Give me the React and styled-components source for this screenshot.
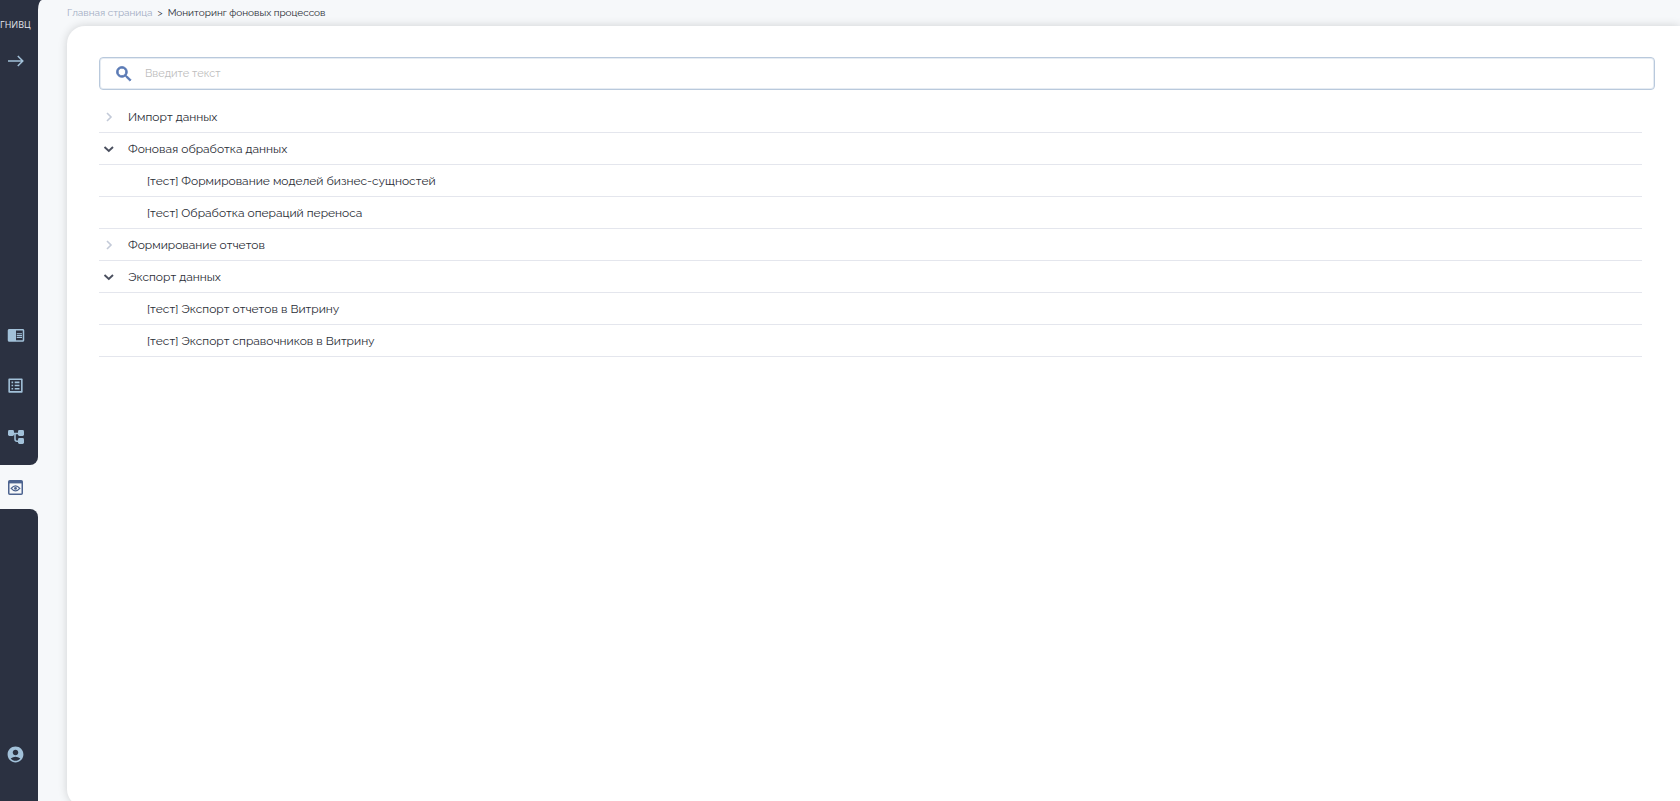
import React, { useState } from "react";
import styled, { createGlobalStyle } from "styled-components";
import {
  MdAccountCircle,
  MdChromeReaderMode,
  MdOutlineListAlt,
  MdSearch,
} from "react-icons/md";

const GlobalStyle = createGlobalStyle`
  *, *::before, *::after { box-sizing: border-box; }
  body {
    margin: 0;
    background: #f6f8fa;
    color: #2a2d36;
    font-family: Raleway, "Open Sans", "Noto Sans", sans-serif;
    font-size: 12px;
  }
  button, input { font: inherit; color: inherit; }
`;

const Page = styled.div`
  display: flex;
  height: 100vh;
  overflow: hidden;
  background: #2b3141;
`;

const Sidebar = styled.nav`
  display: flex;
  flex: none;
  flex-direction: column;
  width: 38px;
  background: #f6f8fa;
`;

const SideBlock = styled.div`
  display: flex;
  flex-direction: column;
  align-items: flex-start;
  background: #2b3141;
`;

const UpperBlock = styled(SideBlock)`
  flex: 1 1 208px;
  padding: 17px 0 3px;
  border-bottom-right-radius: 8px;
`;

const LowerBlock = styled(SideBlock)`
  flex: 1 1 35px;
  justify-content: flex-end;
  padding-bottom: 35px;
  border-top-right-radius: 8px;
`;

const Logo = styled.span`
  margin-bottom: 16px;
  color: #e3e6ec;
  font-family: "Open Sans", "Noto Sans", sans-serif;
  font-size: 9px;
  line-height: 16px;
`;

const NavButton = styled.button`
  display: flex;
  flex: none;
  align-items: center;
  justify-content: center;
  width: 31px;
  height: ${(p) => (p.$compact ? "24px" : "51px")};
  padding: 0;
  border: 0;
  background: none;
  color: #a2c1d9;
  cursor: pointer;
`;

const ActiveButton = styled(NavButton)`
  height: 44px;
  color: #4c638f;
`;

const Spacer = styled.div`
  flex: 1;
`;

const Main = styled.main`
  display: flex;
  flex: 1;
  flex-direction: column;
  min-width: 0;
  padding-left: 29px;
  background: #f6f8fa;
  border-top-left-radius: 4px 10px;
`;

const Breadcrumbs = styled.nav`
  display: flex;
  gap: 5px;
  padding: 5px 0;
  font-size: 10px;
  line-height: 16px;
`;

const CrumbLink = styled.a`
  color: #a3adc4;
  text-decoration: none;
`;

const Card = styled.section`
  flex: 1;
  margin-bottom: -6px;
  padding: 31px 25px 0 32px;
  background: #fff;
  border-radius: 18px 0 0 18px;
  box-shadow: 0 0 10px rgba(0, 0, 0, 0.16);
`;

const SearchBox = styled.label`
  display: flex;
  align-items: center;
  gap: 11px;
  height: 33px;
  padding: 0 14px;
  border: 1px solid #b9c9dc;
  border-radius: 4px;
  box-shadow: inset 0 0 0 1px #e6ecf3;
  color: #5a7ab5;
`;

const SearchIcon = styled(MdSearch)`
  flex: none;
  path:last-child {
    stroke: currentColor;
    stroke-width: 1;
  }
  path[fill="none"] {
    stroke: none;
  }
`;

const SearchInput = styled.input`
  flex: 1;
  min-width: 0;
  padding: 0;
  border: 0;
  outline: 0;
  background: none;
  font-size: 11px;
  line-height: 16px;
  &::placeholder { color: #bdbdbd; opacity: 1; }
`;

const Tree = styled.ul`
  margin: 11px 13px 0 0;
  padding: 0;
  list-style: none;
`;

const SubTree = styled.ul`
  margin: 0;
  padding: 0;
  list-style: none;
`;

const rowStyles = `
  display: flex;
  align-items: center;
  width: 100%;
  height: 32px;
  border: 0;
  border-bottom: 1px solid #e4e6ed;
  background: none;
  text-align: left;
`;

const GroupRow = styled.button`
  ${rowStyles}
  gap: 9px;
  padding: 0;
  cursor: pointer;
`;

const LeafRow = styled.div`
  ${rowStyles}
  padding-left: 48px;
`;

const Chevron = styled.svg`
  flex: none;
  fill: none;
  stroke: ${(p) => (p.$open ? "#4a4f5e" : "#c3cad8")};
  stroke-width: ${(p) => (p.$open ? 1.9 : 1.6)};
`;

const groups = [
  { title: "Импорт данных", items: [] },
  {
    title: "Фоновая обработка данных",
    open: true,
    items: ["[тест] Формирование моделей бизнес-сущностей", "[тест] Обработка операций переноса"],
  },
  { title: "Формирование отчетов", items: [] },
  {
    title: "Экспорт данных",
    open: true,
    items: ["[тест] Экспорт отчетов в Витрину", "[тест] Экспорт справочников в Витрину"],
  },
];

function ArrowIcon() {
  return (
    <svg width="17" height="14" viewBox="0 0 17 14" fill="none" stroke="currentColor" strokeWidth="1.5" aria-hidden="true">
      <path d="M1 7h15M10.8 2 15.8 7 10.8 12" />
    </svg>
  );
}

function TreeIcon() {
  return (
    <svg width="17" height="18" viewBox="0 0 17 18" aria-hidden="true">
      <path d="M5 5.5h6M8 5.5v5.7q0 2 2 2H12" fill="none" stroke="currentColor" strokeWidth="1.5" />
      <g fill="currentColor">
        <rect x="1" y="2" width="6" height="6" rx="1.4" />
        <rect x="11" y="2" width="6" height="6" rx="1.4" />
        <rect x="11" y="10" width="6" height="6" rx="1.4" />
      </g>
    </svg>
  );
}

function MonitorIcon() {
  return (
    <svg width="15" height="15" viewBox="0 0 15 15" fill="none" stroke="currentColor" aria-hidden="true">
      <rect x="0.75" y="0.75" width="13.5" height="13.5" rx="1" strokeWidth="1.5" />
      <path d="M1 2.2h13" strokeWidth="2.4" />
      <path d="M3.2 8.4q4.3-5 8.6 0q-4.3 5-8.6 0z" strokeWidth="1.3" />
      <circle cx="7.5" cy="8.4" r="1.4" fill="currentColor" stroke="none" />
    </svg>
  );
}

function Group({ title, items, open: initial = false }) {
  const [open, setOpen] = useState(initial);
  return (
    <li>
      <GroupRow type="button" aria-expanded={open} onClick={() => setOpen(!open)}>
        <Chevron $open={open} width="20" height="20" viewBox="0 0 20 20" aria-hidden="true">
          <path d={open ? "M5.5 8 9.8 12 14 8" : "M8 6 12 10 8 14"} />
        </Chevron>
        {title}
      </GroupRow>
      {open && (
        <SubTree>
          {items.map((item) => (
            <li key={item}>
              <LeafRow>{item}</LeafRow>
            </li>
          ))}
        </SubTree>
      )}
    </li>
  );
}

export default function App() {
  return (
    <>
      <GlobalStyle />
      <Page>
        <Sidebar aria-label="Разделы">
          <UpperBlock>
            <Logo>ГНИВЦ</Logo>
            <NavButton $compact type="button" aria-label="Развернуть меню">
              <ArrowIcon />
            </NavButton>
            <Spacer />
            <NavButton type="button" aria-label="Справочники">
              <MdChromeReaderMode size={18} />
            </NavButton>
            <NavButton type="button" aria-label="Отчеты">
              <MdOutlineListAlt size={19} />
            </NavButton>
            <NavButton type="button" aria-label="Модели">
              <TreeIcon />
            </NavButton>
          </UpperBlock>
          <ActiveButton type="button" aria-label="Мониторинг" aria-current="page">
            <MonitorIcon />
          </ActiveButton>
          <LowerBlock>
            <NavButton $compact type="button" aria-label="Профиль">
              <MdAccountCircle size={19} />
            </NavButton>
          </LowerBlock>
        </Sidebar>
        <Main>
          <Breadcrumbs aria-label="Навигация">
            <CrumbLink href="#home">Главная страница</CrumbLink>
            <span>&gt;</span>
            <span>Мониторинг фоновых процессов</span>
          </Breadcrumbs>
          <Card>
            <SearchBox>
              <SearchIcon size={20} aria-hidden="true" />
              <SearchInput type="search" placeholder="Введите текст" aria-label="Поиск" />
            </SearchBox>
            <Tree>
              {groups.map((g) => (
                <Group key={g.title} {...g} />
              ))}
            </Tree>
          </Card>
        </Main>
      </Page>
    </>
  );
}
